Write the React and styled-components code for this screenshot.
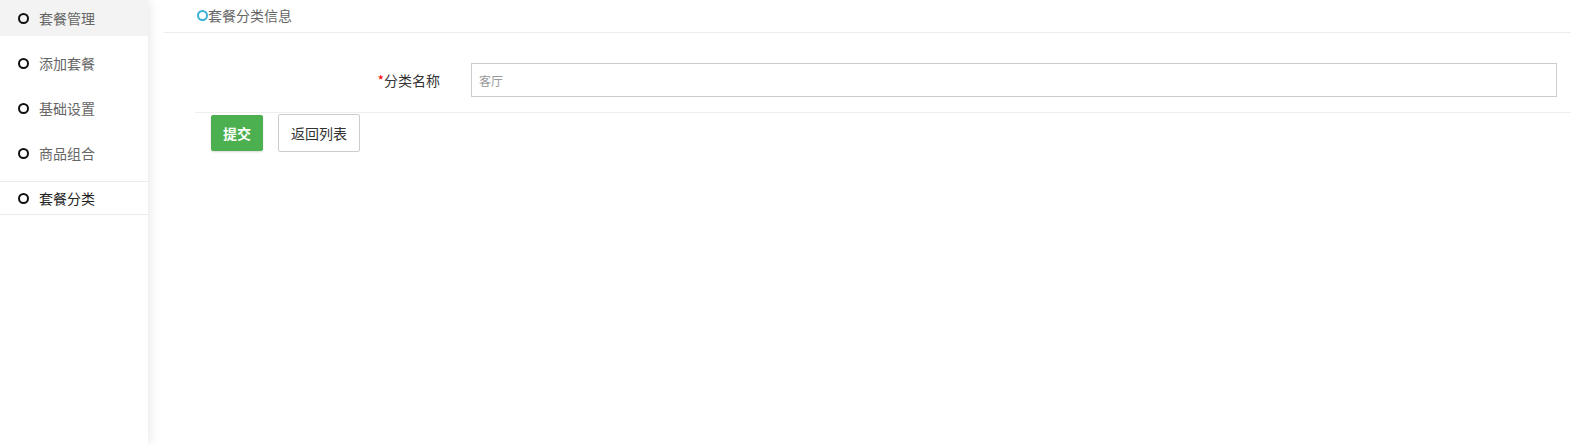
import React from 'react';
import styled, { createGlobalStyle } from 'styled-components';

const GlobalStyle = createGlobalStyle`
  html, body {
    margin: 0;
    padding: 0;
    background: #fff;
    font-family: "Noto Sans CJK SC", "Liberation Sans", sans-serif;
  }
`;

const Page = styled.div`
  display: flex;
  width: 1571px;
  height: 444px;
  overflow: hidden;
`;

const Sidebar = styled.nav`
  width: 148px;
  flex-shrink: 0;
  background: #fff;
  box-shadow: 2px 0 10px rgba(0, 0, 0, 0.09);
  position: relative;
  z-index: 1;
`;

const MenuGroup = styled.ul`
  list-style: none;
  margin: 0;
  padding: 0;
  display: flex;
  flex-direction: column;
  gap: 9px;
  padding-bottom: 10px;
  border-bottom: 1px solid #eaeaea;
`;

const SubGroup = styled.ul`
  list-style: none;
  margin: 0;
  padding: 0;
  border-bottom: 1px solid #eaeaea;
`;

const MenuItem = styled.li`
  display: flex;
  align-items: center;
  height: ${p => p.$h || 36}px;
  padding-left: 18px;
  font-size: 14px;
  color: ${p => (p.$current ? '#222' : '#666')};
  background: ${p => (p.$hover ? '#f3f3f3' : 'transparent')};
`;

const Ring = styled.span`
  box-sizing: border-box;
  width: ${p => p.$size || 11}px;
  height: ${p => p.$size || 11}px;
  border-radius: 50%;
  border: 2px solid ${p => p.$color || '#111'};
  margin-right: ${p => p.$gap ?? 10}px;
  flex-shrink: 0;
`;

const Main = styled.main`
  flex: 1;
  padding-left: 16px;
`;

const TitleBar = styled.div`
  display: flex;
  align-items: center;
  height: 33px;
  padding-left: 33px;
  border-bottom: 1px solid #ececec;
  font-size: 14px;
  color: #666;
  box-sizing: border-box;
  padding-bottom: 2px;
`;

const Form = styled.form`
  padding-left: 31px;
  padding-top: 30px;
`;

const Row = styled.div`
  display: flex;
  align-items: center;
  padding-bottom: 15px;
  border-bottom: 1px solid #eeeeee;
`;

const Label = styled.label`
  width: 245px;
  text-align: right;
  font-size: 14px;
  color: #333;
`;

const Star = styled.span`
  color: #f00;
`;

const Input = styled.input`
  box-sizing: border-box;
  width: 1086px;
  height: 34px;
  margin-left: 31px;
  border: 1px solid #cccccc;
  padding: 0 7px;
  font-size: 12px;
  color: #999;
  font-family: inherit;
  outline: none;
`;

const Actions = styled.div`
  display: flex;
  gap: 15px;
  padding-left: 16px;
  padding-top: 1px;
`;

const Button = styled.button`
  box-sizing: border-box;
  height: ${p => (p.$primary ? 36 : 38)}px;
  width: ${p => (p.$primary ? 52 : 82)}px;
  margin-top: ${p => (p.$primary ? 1 : 0)}px;
  border: 1px solid ${p => (p.$primary ? '#4cae4f' : '#cccccc')};
  border-radius: 2px;
  background: ${p => (p.$primary ? '#4cb050' : '#fff')};
  color: ${p => (p.$primary ? '#fff' : '#333')};
  font-size: 14px;
  font-weight: ${p => (p.$primary ? 600 : 400)};
  font-family: inherit;
  box-shadow: ${p => (p.$primary ? '0 1px 2px rgba(0,0,0,0.15)' : 'none')};
  padding: 0;
`;

const menu = ['套餐管理', '添加套餐', '基础设置', '商品组合'];

export default function App() {
  return (
    <>
      <GlobalStyle />
      <Page>
        <Sidebar>
          <MenuGroup>
            {menu.map((m, i) => (
              <MenuItem key={m} $hover={i === 0}>
                <Ring />
                {m}
              </MenuItem>
            ))}
          </MenuGroup>
          <SubGroup>
            <MenuItem $h={32} $current>
              <Ring />
              套餐分类
            </MenuItem>
          </SubGroup>
        </Sidebar>
        <Main>
          <TitleBar>
            <Ring $color="#3ab0d8" $size={11} $gap={0} />
            套餐分类信息
          </TitleBar>
          <Form onSubmit={e => e.preventDefault()}>
            <Row>
              <Label>
                <Star>*</Star>分类名称
              </Label>
              <Input defaultValue="客厅" />
            </Row>
            <Actions>
              <Button $primary type="submit">提交</Button>
              <Button type="button">返回列表</Button>
            </Actions>
          </Form>
        </Main>
      </Page>
    </>
  );
}
